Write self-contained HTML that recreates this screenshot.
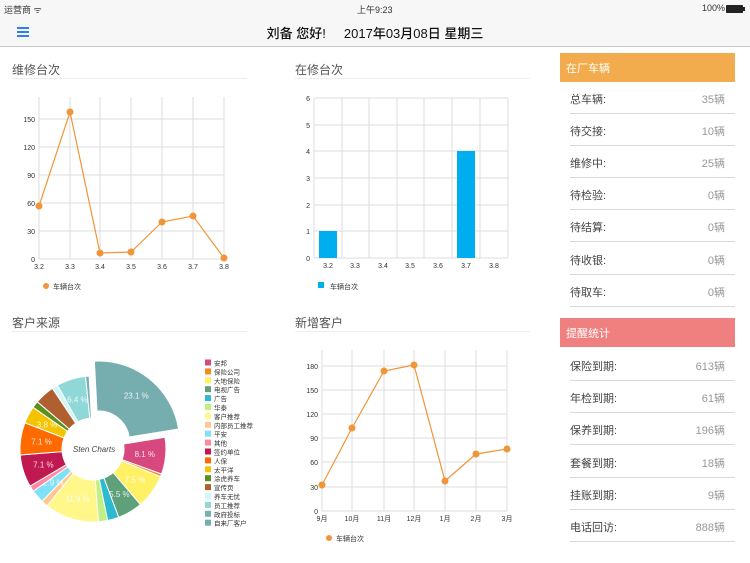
<!DOCTYPE html>
<html><head><meta charset="utf-8"><style>
*{margin:0;padding:0;box-sizing:border-box}
body{width:750px;height:563px;overflow:hidden;background:#fff;font-family:"Liberation Sans","Noto Sans CJK SC",sans-serif;position:relative;color:#333}
.abs{position:absolute}
.status{left:0;top:0;width:750px;height:20px;background:#f7f7f7;font-size:9px}
.nav{left:0;top:20px;width:750px;height:27px;background:#f7f7f7;border-bottom:1px solid #c8c8c8}
.title{font-size:12px;color:#555}
.uline{height:1px;background:#eee}
.hdr{left:560px;width:175px;height:29px;color:#fff;font-size:11px;padding:7px 0 0 6px}
.row{left:570px;width:165px;height:32px;border-bottom:1px solid #d8d8d8;font-size:11px;color:#444}
.row span{position:absolute;top:9px}
.row .v{right:10px;color:#999}
svg text{font-family:"Liberation Sans","Noto Sans CJK SC",sans-serif}
</style></head><body>
<div class="abs status"><span class="abs" style="left:4px;top:3px">运营商 ᯤ</span><span class="abs" style="left:357px;top:3px">上午9:23</span><span class="abs" style="left:702px;top:3px">100%</span><div class="abs" style="left:726px;top:5px;width:17px;height:8px;background:#222;border-radius:1px"></div><div class="abs" style="left:743px;top:7px;width:2px;height:4px;background:#222"></div></div>
<div class="abs nav"><div class="abs" style="left:17px;top:7px;width:12px;height:2px;background:#2e7cf6;box-shadow:0 4px 0 #2e7cf6,0 8px 0 #2e7cf6"></div><div class="abs" style="left:0;width:750px;top:3px;text-align:center;font-size:13px;color:#111;font-weight:500">刘备 您好!&nbsp;&nbsp;&nbsp;&nbsp;&nbsp;2017年03月08日 星期三</div></div>

<div class="abs title" style="left:12px;top:61px">维修台次</div><div class="abs uline" style="left:12px;top:78px;width:235px"></div>
<div class="abs title" style="left:295px;top:61px">在修台次</div><div class="abs uline" style="left:295px;top:78px;width:235px"></div>
<div class="abs title" style="left:12px;top:314px">客户来源</div><div class="abs uline" style="left:12px;top:331px;width:235px"></div>
<div class="abs title" style="left:295px;top:314px">新增客户</div><div class="abs uline" style="left:295px;top:331px;width:235px"></div>

<svg class="abs" style="left:0;top:0" width="750" height="563" id="s">
<g stroke="#ddd" stroke-width="1" fill="none">
<path d="M39 97V259M70 97V259M100 97V259M131 97V259M162 97V259M193 97V259M224 97V259"/>
<path d="M39 231H224M39 203H224M39 175H224M39 147H224M39 119H224M39 259H224"/>
<path d="M314 98V258M342 98V258M369 98V258M397 98V258M424 98V258M452 98V258M480 98V258M508 98V258"/>
<path d="M314 98H508M314 125H508M314 151H508M314 178H508M314 205H508M314 231H508M314 258H508"/>
<path d="M322 350V511M352 350V511M384 350V511M414 350V511M445 350V511M476 350V511M507 350V511"/>
<path d="M322 511H507M322 487H507M322 462H507M322 438H507M322 414H507M322 390H507M322 366H507"/>
</g>
<g font-size="7" fill="#333" text-anchor="end">
<text x="35" y="262">0</text><text x="35" y="234">30</text><text x="35" y="206">60</text><text x="35" y="178">90</text><text x="35" y="150">120</text><text x="35" y="122">150</text>
<text x="310" y="261">0</text><text x="310" y="234">1</text><text x="310" y="208">2</text><text x="310" y="181">3</text><text x="310" y="154">4</text><text x="310" y="128">5</text><text x="310" y="101">6</text>
<text x="318" y="514">0</text><text x="318" y="490">30</text><text x="318" y="465">60</text><text x="318" y="441">90</text><text x="318" y="417">120</text><text x="318" y="393">150</text><text x="318" y="369">180</text>
</g>
<g font-size="7" fill="#333" text-anchor="middle">
<text x="39" y="269">3.2</text><text x="70" y="269">3.3</text><text x="100" y="269">3.4</text><text x="131" y="269">3.5</text><text x="162" y="269">3.6</text><text x="193" y="269">3.7</text><text x="224" y="269">3.8</text>
<text x="328" y="268">3.2</text><text x="355" y="268">3.3</text><text x="383" y="268">3.4</text><text x="410" y="268">3.5</text><text x="438" y="268">3.6</text><text x="466" y="268">3.7</text><text x="494" y="268">3.8</text>
<text x="322" y="521">9月</text><text x="352" y="521">10月</text><text x="384" y="521">11月</text><text x="414" y="521">12月</text><text x="445" y="521">1月</text><text x="476" y="521">2月</text><text x="507" y="521">3月</text>
</g>
<polyline fill="none" stroke="#f0953a" stroke-width="1.2" points="39,206 70,112 100,253 131,252 162,222 193,216 224,258"/>
<g fill="#f0953a"><circle cx="39" cy="206" r="3.5"/><circle cx="70" cy="112" r="3.5"/><circle cx="100" cy="253" r="3.5"/><circle cx="131" cy="252" r="3.5"/><circle cx="162" cy="222" r="3.5"/><circle cx="193" cy="216" r="3.5"/><circle cx="224" cy="258" r="3.5"/></g>
<polyline fill="none" stroke="#f0953a" stroke-width="1.2" points="322,485 352,428 384,371 414,365 445,481 476,454 507,449"/>
<g fill="#f0953a"><circle cx="322" cy="485" r="3.5"/><circle cx="352" cy="428" r="3.5"/><circle cx="384" cy="371" r="3.5"/><circle cx="414" cy="365" r="3.5"/><circle cx="445" cy="481" r="3.5"/><circle cx="476" cy="454" r="3.5"/><circle cx="507" cy="449" r="3.5"/></g>
<g fill="#00aeef"><rect x="319" y="231" width="18" height="27"/><rect x="457" y="151" width="18" height="107"/></g>
<circle cx="46" cy="286" r="3" fill="#f0953a"/><text x="53" y="289" font-size="7" fill="#333">车辆台次</text>
<rect x="318" y="282" width="6" height="6" fill="#00aeef"/><text x="330" y="289" font-size="7" fill="#333">车辆台次</text>
<circle cx="329" cy="538" r="3" fill="#f0953a"/><text x="336" y="541" font-size="7" fill="#333">车辆台次</text>
<g id="pie"></g>
<text x="94" y="452" font-size="8" fill="#444" font-style="italic" text-anchor="middle">Sten Charts</text>
<g id="leg" font-size="6.5" fill="#333"></g>
</svg>

<div class="abs hdr" style="top:53px;background:#f2ac4e">在厂车辆</div>
<div class="abs row" style="top:82px"><span>总车辆:</span><span class="v">35辆</span></div>
<div class="abs row" style="top:114px"><span>待交接:</span><span class="v">10辆</span></div>
<div class="abs row" style="top:146px"><span>维修中:</span><span class="v">25辆</span></div>
<div class="abs row" style="top:178px"><span>待检验:</span><span class="v">0辆</span></div>
<div class="abs row" style="top:210px"><span>待结算:</span><span class="v">0辆</span></div>
<div class="abs row" style="top:243px"><span>待收银:</span><span class="v">0辆</span></div>
<div class="abs row" style="top:275px"><span>待取车:</span><span class="v">0辆</span></div>
<div class="abs hdr" style="top:318px;background:#f08080">提醒统计</div>
<div class="abs row" style="top:349px"><span>保险到期:</span><span class="v">613辆</span></div>
<div class="abs row" style="top:381px"><span>年检到期:</span><span class="v">61辆</span></div>
<div class="abs row" style="top:413px"><span>保养到期:</span><span class="v">196辆</span></div>
<div class="abs row" style="top:446px"><span>套餐到期:</span><span class="v">18辆</span></div>
<div class="abs row" style="top:478px"><span>挂账到期:</span><span class="v">9辆</span></div>
<div class="abs row" style="top:510px"><span>电话回访:</span><span class="v">888辆</span></div>

<script>
var d=[["自来厂客户",23.1,"#76aeb0","23.1 %"],["安邦",8.1,"#d6487e","8.1 %"],["保险公司",0.6,"#f58a1f",""],["大地保险",7.5,"#fff066","7.5 %"],["电视广告",5.5,"#5ea07a","5.5 %"],["广告",2.5,"#2bbad0",""],["华泰",2.0,"#c0f080",""],["客户推荐",11.9,"#fff78a","11.9 %"],["内部员工推荐",1.5,"#ffc890",""],["平安",2.9,"#80e0f8","2.9 %"],["其他",1.3,"#ff8aa0",""],["签约单位",7.1,"#c01850","7.1 %"],["人保",7.1,"#ff6a00","7.1 %"],["太平洋",3.8,"#f5c400","3.8 %"],["涂虎养车",1.5,"#5a9020",""],["宣传页",4.4,"#b06030",""],["养车无忧",1.3,"#d0f6f6",""],["员工推荐",6.4,"#90d8d8","6.4 %"],["政府投标",0.8,"#78b0b8",""]];
var tot=0;d.forEach(function(x){tot+=x[1]});
var cx=93,cy=449,R=73,r=31,a=-93*Math.PI/180,g=document.getElementById('pie'),h='';
function p(rad,an,ox,oy){return (cx+ox+rad*Math.cos(an)).toFixed(1)+' '+(cy+oy+rad*Math.sin(an)).toFixed(1)}
d.forEach(function(x,i){var s=x[1]/tot*2*Math.PI,b=a+s,m=(a+b)/2,ox=0,oy=0,RR=R;
if(i==0){ox=9*Math.cos(m);oy=9*Math.sin(m);RR=R+8}
var lg=s>Math.PI?1:0;
h+='<path d="M'+p(r,a,ox,oy)+'L'+p(RR,a,ox,oy)+'A'+RR+' '+RR+' 0 '+lg+' 1 '+p(RR,b,ox,oy)+'L'+p(r,b,ox,oy)+'A'+r+' '+r+' 0 '+lg+' 0 '+p(r,a,ox,oy)+'Z" fill="'+x[2]+'" stroke="#fff" stroke-width="1"/>';
if(x[3]){var lr=(RR+r)/2+(i==0?4:0);h+='<text x="'+(cx+ox+lr*Math.cos(m)).toFixed(1)+'" y="'+(cy+oy+lr*Math.sin(m)+3).toFixed(1)+'" font-size="8" fill="#fff" fill-opacity="0.85" text-anchor="middle">'+x[3]+'</text>'}
a=b});
g.innerHTML=h;
var order=[1,2,3,4,5,6,7,8,9,10,11,12,13,14,15,16,17,18,0],l='';
order.forEach(function(k,j){var y=360+j*8.9;l+='<rect x="205" y="'+(y-0.5)+'" width="6" height="6" fill="'+d[k][2]+'"/><text x="214" y="'+(y+5.5)+'">'+d[k][0]+'</text>'});
document.getElementById('leg').innerHTML=l;
</script>
</body></html>
